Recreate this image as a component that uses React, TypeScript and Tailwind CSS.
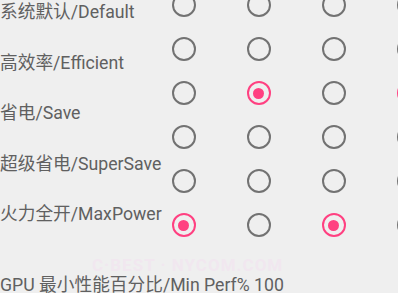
import React from "react";

const labels = [
  "系统默认/Default",
  "高效率/Efficient",
  "省电/Save",
  "超级省电/SuperSave",
  "火力全开/MaxPower",
];

const grid: boolean[][] = [
  [false, false, false, false],
  [false, false, false, false],
  [false, true, false, true],
  [false, false, false, false],
  [false, false, false, false],
  [true, false, true, false],
];

function Radio({ checked }: { checked: boolean }) {
  return checked ? (
    <div className="flex h-[24px] w-[24px] items-center justify-center rounded-full border-[2.5px] border-[#ff4081]">
      <div className="h-[11px] w-[11px] rounded-full bg-[#ff4081]" />
    </div>
  ) : (
    <div className="h-[24px] w-[24px] rounded-full border-[2.5px] border-[#727272]" />
  );
}

export default function App() {
  return (
    <div
      className="relative h-[293px] w-[398px] overflow-hidden bg-[#efefef] text-[17.7px] text-[#606060]"
      style={{ fontFamily: 'Roboto, "Noto Sans CJK SC", sans-serif' }}
    >
      <div className="flex h-[247px]">
        <div className="mt-[-13px] flex w-[146px] shrink-0 flex-col">
          {labels.map((l) => (
            <div key={l} className="flex h-[50.6px] items-center whitespace-nowrap">
              {l}
            </div>
          ))}
        </div>
        <div className="mt-[-17px] grid grid-cols-[75px_75px_75px_75px]">
          {grid.map((row, r) =>
            row.map((c, i) => (
              <div key={`${r}-${i}`} className="flex h-[44px] items-center justify-center">
                <Radio checked={c} />
              </div>
            ))
          )}
        </div>
      </div>
      <div className="mt-[30px] whitespace-nowrap leading-[16px]">GPU 最小性能百分比/Min Perf% 100</div>
      <div className="pointer-events-none absolute left-[92px] top-[258px] whitespace-nowrap text-[17px] font-bold leading-[15px] tracking-[1px] text-[#f1e7ef]">
        C·BEST · NYCOM.COM
      </div>
    </div>
  );
}
